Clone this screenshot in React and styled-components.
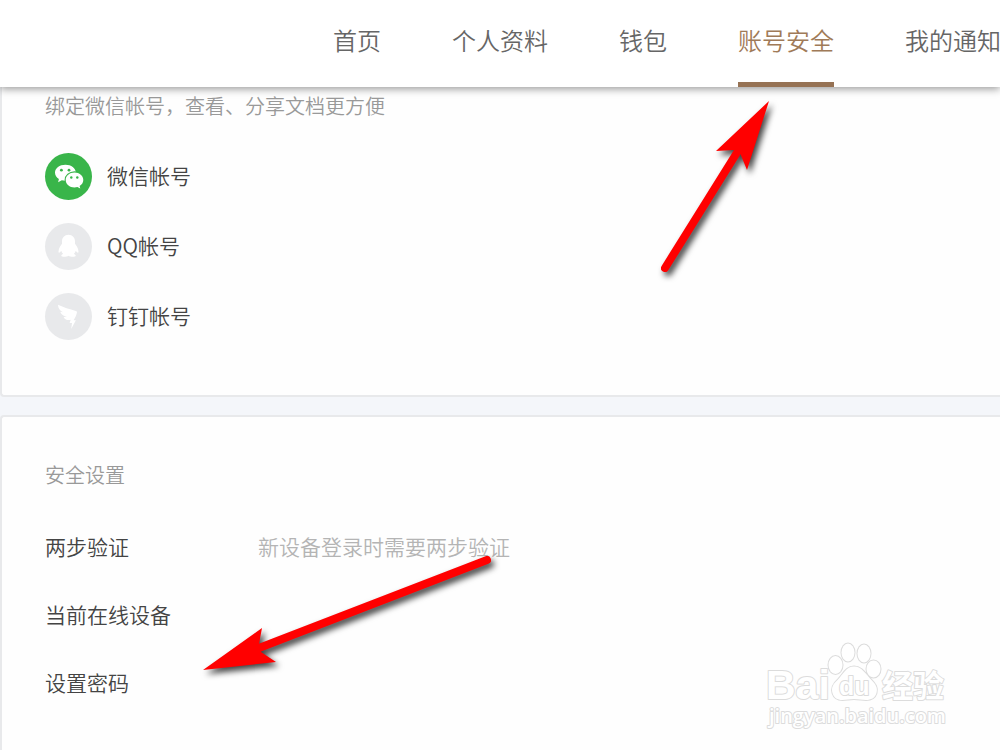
import React from "react";
import styled, { createGlobalStyle } from "styled-components";

const GlobalStyle = createGlobalStyle`
  * { box-sizing: border-box; }
  body {
    margin: 0;
    background: #f4f6fa;
    font-family: "Noto Sans CJK SC", "Noto Sans", sans-serif;
    font-weight: 350;
    color: #444;
  }
  ul { margin: 0; padding: 0; list-style: none; }
`;

const Page = styled.div`
  position: relative;
  display: flex;
  flex-direction: column;
  min-height: 100vh;
  overflow: hidden;
`;

const Header = styled.header`
  position: relative;
  height: 87px;
  padding-left: 333px;
  background: #fff;
  box-shadow: 0 2px 8px rgba(0, 0, 0, 0.4);
`;

const Nav = styled.nav`
  display: flex;
  gap: 71px;
  height: 100%;
`;

const NavLink = styled.a`
  flex: none;
  padding-top: 22px;
  border-bottom: 5px solid ${(p) => (p.$active ? "#967254" : "transparent")};
  color: ${(p) => (p.$active ? "#a07a58" : "#666")};
  font-size: 24px;
  line-height: 36px;
  text-decoration: none;
`;

const Card = styled.section`
  padding: ${(p) => (p.$first ? "4px 43px 55px" : "43px 43px 40px")};
  flex-grow: ${(p) => (p.$first ? 0 : 1)};
  border: 2px solid #e8e9eb;
  border-top-width: ${(p) => (p.$first ? 0 : "2px")};
  border-right: 0;
  border-bottom-width: ${(p) => (p.$first ? "2px" : 0)};
  border-radius: ${(p) => (p.$first ? "0 0 0 4px" : "4px 0 0 0")};
  background: #fefefe;

  & + & { margin-top: 18px; }
`;

const Caption = styled.h2`
  margin: 0;
  color: #999;
  font-size: 20px;
  font-weight: 350;
  line-height: 30px;
`;

const AccountList = styled.ul`
  display: grid;
  gap: 23px;
  margin-top: 32px;
`;

const AccountButton = styled.button`
  display: flex;
  align-items: center;
  gap: 15px;
  padding: 0;
  border: 0;
  background: none;
  color: #444;
  font: inherit;
  font-size: 21px;
  line-height: 30px;
  cursor: pointer;
`;

const AccountName = styled.span`
  padding-bottom: 4px;
`;

const Badge = styled.svg`
  width: 47px;
  height: 47px;
  border-radius: 50%;
  background: ${(p) => p.$color};
`;

const SettingList = styled.ul`
  display: grid;
  gap: 38px;
  margin-top: 41px;
`;

const SettingRow = styled.li`
  display: flex;
  font-size: 21px;
  line-height: 30px;
`;

const SettingLink = styled.a`
  width: 213px;
  color: #444;
  text-decoration: none;
`;

const Hint = styled.span`
  color: #b4b4b4;
`;

const Overlay = styled.svg`
  position: absolute;
  left: ${(p) => p.$x}px;
  top: ${(p) => p.$y}px;
  overflow: visible;
  pointer-events: none;
`;

const ArrowShape = styled.g`
  fill: #f00;
  stroke: #f00;
  filter: drop-shadow(3px 4px 3px rgba(0, 0, 0, 0.75));
`;

const Mark = styled.g`
  fill: #fff;
  stroke: #dcdcdc;
  stroke-width: 2px;
  stroke-linejoin: round;
  paint-order: stroke;
`;

const MarkText = styled.text`
  font-family: ${(p) => p.$font || '"Liberation Sans"'}, "Noto Sans CJK SC", sans-serif;
  font-size: ${(p) => p.$size}px;
  font-weight: ${(p) => p.$weight || 700};
`;

function WechatIcon() {
  return (
    <Badge $color="#39b54a" viewBox="0 0 47 47" aria-hidden="true">
      <path fill="#fff" d="M20.4 11.7C14.6 11.7 10 15.2 10 19.7c0 2.6 1.5 4.8 3.9 6.3l-.8 3.2 3.7-1.9c1.2.3 2.3.5 3.6.5 5.8 0 10.4-3.6 10.4-8.1s-4.600-8-10.400-8z" />
      <ellipse cx="29.500" cy="27" rx="9.900" ry="8.700" fill="#39b54a" />
      <path fill="#fff" d="M29.500 19.400c-4.900 0-8.800 3.300-8.800 7.500s3.900 7.500 8.800 7.500c1 0 2-.2 2.900-.4l2.900 1.500-.7-2.600c2.300-1.400 3.700-3.500 3.700-6 0-4.200-3.900-7.500-8.800-7.500z" />
      <g fill="#39b54a">
        <circle cx="16.400" cy="17.200" r="1.400" />
        <circle cx="24" cy="17.200" r="1.400" />
        <circle cx="26.300" cy="24.500" r="1.200" />
        <circle cx="32.300" cy="24.500" r="1.200" />
      </g>
    </Badge>
  );
}

function QqIcon() {
  return (
    <Badge $color="#e8e9eb" viewBox="0 0 47 47" aria-hidden="true">
      <path fill="#fff" d="M23.500 11.700c-4 0-6.500 3-6.500 6.700v2.400c-.9 1.500-3.400 4.200-3.500 7.600 0 1 .5 1.600 1.100 1.200.7-.5 1.200-1 1.600-1.800.4 1.300 1 2.400 2 3.300-1.400.5-2.100 1.100-1.900 1.900.4 1.200 5.800 1 7.200-.3 1.400 1.300 6.800 1.500 7.200.3.200-.8-.5-1.400-1.900-1.900 1-.9 1.600-2 2-3.300.4.8.9 1.300 1.600 1.800.6.4 1.100-.2 1.100-1.200-.1-3.400-2.600-6.100-3.500-7.600v-2.400c0-3.700-2.500-6.700-6.500-6.700z" />
    </Badge>
  );
}

function DingIcon() {
  return (
    <Badge $color="#e8e9eb" viewBox="0 0 47 47" aria-hidden="true">
      <path fill="#fff" d="M13 11.800c5.500 2.700 11.500 4.300 17.800 6.300 1 .3 1.300.8 1.100 1.600-.6 2.800-1.900 5.200-3.300 7.600h2.300L26.200 36l.8-5.900h-2.400l1.100-3.300c-1.800.5-3.700.4-5.200-.6-1-.7-1.600-1.500-1.900-2.300l3.400-.2c-2.700-.4-4.800-1.400-6.100-3.400-.3-.5-.5-1-.5-1.500l2.700.4c-3.200-1.400-5-3.600-5.100-7.400z" />
    </Badge>
  );
}

const navItems = ["首页", "个人资料", "钱包", "账号安全", "我的通知"];
const accounts = [
  { label: "微信帐号", Icon: WechatIcon },
  { label: "QQ帐号", Icon: QqIcon },
  { label: "钉钉帐号", Icon: DingIcon },
];
const settings = [
  { label: "两步验证", hint: "新设备登录时需要两步验证" },
  { label: "当前在线设备" },
  { label: "设置密码" },
];

function Watermark() {
  return (
    <Overlay $x={766} $y={640} width="185" height="90">
      <Mark>
        <MarkText x="0" y="59" $size={41}>Bai</MarkText>
        <ellipse cx="69.500" cy="25" rx="7" ry="9" />
        <ellipse cx="82" cy="12.500" rx="6.500" ry="9" />
        <ellipse cx="98" cy="13.500" rx="6.500" ry="9" />
        <ellipse cx="107.500" cy="29" rx="7" ry="8.500" />
        <path d="M88 26.500c-8 0-11 8-16 13-5 4.500-7 8-5.500 13.500 1.500 5 5 7 10 7 4 0 7-1 11.500-1s8 1 12 1c5 0 9-2 10.500-7 1.500-5.500-1-9-5.500-13.500-5-5-9-13-17-13z" />
        <MarkText x="73" y="55" $size={25}>du</MarkText>
        <MarkText x="116" y="57" $size={31}>经验</MarkText>
        <MarkText x="3" y="83" $size={20} $weight={600} $font='"Open Sans"'>jingyan.baidu.com</MarkText>
      </Mark>
    </Overlay>
  );
}

export default function App() {
  return (
    <Page>
      <GlobalStyle />
      <Header>
        <Nav>
          {navItems.map((item) => (
            <NavLink key={item} href="#" $active={item === "账号安全"}>{item}</NavLink>
          ))}
        </Nav>
      </Header>
      <Card $first>
        <Caption>绑定微信帐号，查看、分享文档更方便</Caption>
        <AccountList>
          {accounts.map(({ label, Icon }) => (
            <li key={label}>
              <AccountButton type="button">
                <Icon />
                <AccountName>{label}</AccountName>
              </AccountButton>
            </li>
          ))}
        </AccountList>
      </Card>
      <Card>
        <Caption>安全设置</Caption>
        <SettingList>
          {settings.map(({ label, hint }) => (
            <SettingRow key={label}>
              <SettingLink href="#">{label}</SettingLink>
              {hint && <Hint>{hint}</Hint>}
            </SettingRow>
          ))}
        </SettingList>
      </Card>
      <Overlay $x={660} $y={100} width="110" height="175">
        <ArrowShape>
          <path d="M5 168L78 51" strokeWidth="8" strokeLinecap="round" />
          <path stroke="none" d="M109 1L56 51l18-1 6 3 7 17z" />
        </ArrowShape>
      </Overlay>
      <Overlay $x={203} $y={555} width="290" height="120">
        <ArrowShape>
          <path d="M284 5L56 93" strokeWidth="8" strokeLinecap="round" />
          <path stroke="none" d="M0 115l59-42-3 16 2 8 15 10z" />
        </ArrowShape>
      </Overlay>
      <Watermark />
    </Page>
  );
}
